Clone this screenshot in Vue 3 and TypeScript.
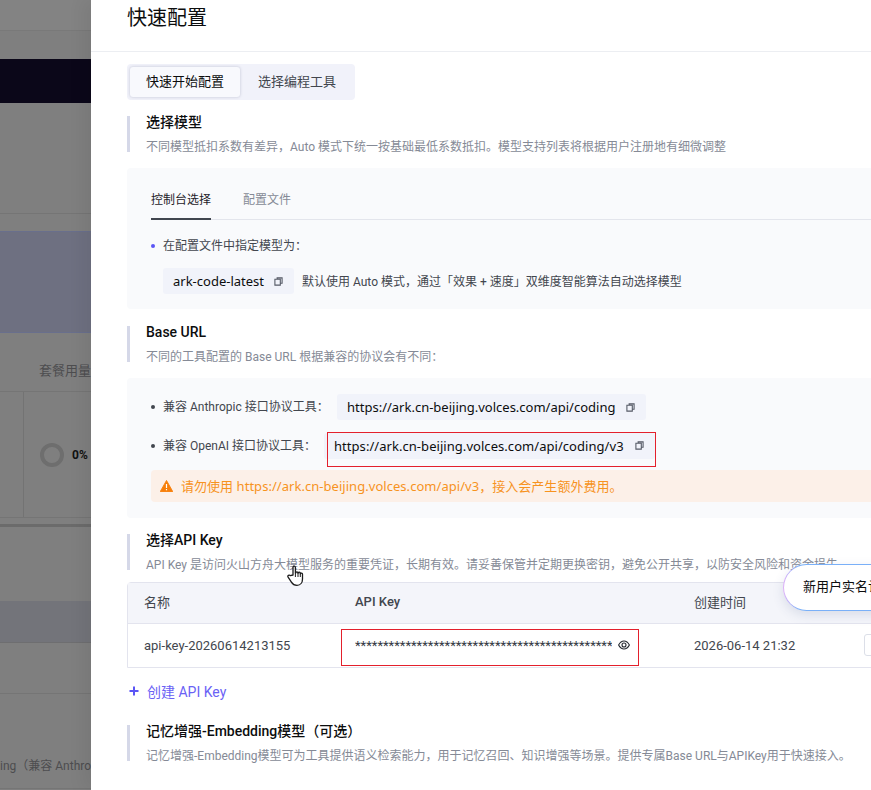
<script setup lang="ts">
const apiKeyMask = '*'.repeat(46)
</script>

<template>
  <div class="page">
    <!-- dimmed page behind the drawer -->
    <aside class="backdrop">
      <div class="band top"></div>
      <div class="band plain h28"></div>
      <div class="band dark"></div>
      <div class="band plain h111 line-bottom"></div>
      <div class="band plain h17"></div>
      <div class="band banner"></div>
      <div class="band usage-title"><span>套餐用量</span></div>
      <div class="band usage">
        <div class="usage-cell"></div>
        <div class="ring"></div>
        <b class="pct">0%</b>
      </div>
      <div class="band plain h6"></div>
      <div class="band thick"></div>
      <div class="band plain h73"></div>
      <div class="band greyblue"></div>
      <div class="band plain h51 line-bottom"></div>
      <div class="band clipped"><span>ing（兼容 Anthropic</span></div>
    </aside>

    <main class="drawer">
      <header class="drawer-head">快速配置</header>

      <div class="drawer-body">
        <div class="segment">
          <span class="seg active">快速开始配置</span>
          <span class="seg">选择编程工具</span>
        </div>

        <section class="heading">
          <h3>选择模型</h3>
          <p>不同模型抵扣系数有差异，Auto 模式下统一按基础最低系数抵扣。模型支持列表将根据用户注册地有细微调整</p>
        </section>

        <div class="panel model-panel">
          <div class="tabs">
            <span class="tab active">控制台选择</span>
            <span class="tab">配置文件</span>
          </div>
          <div class="li first"><i class="dot blue"></i>在配置文件中指定模型为：</div>
          <div class="model-row">
            <span class="chip model-chip">
              ark-code-latest
              <svg class="copy" viewBox="0 0 10 10" width="9" height="9"><path d="M3.500 2.500V1h5.500v6H7.200M1 2.500h6v6.500H1z" fill="none" stroke="#555a66" stroke-width="1.200" /></svg>
            </span>
            <span class="hint">默认使用 Auto 模式，通过「效果 + 速度」双维度智能算法自动选择模型</span>
          </div>
        </div>

        <section class="heading base-url">
          <h3>Base URL</h3>
          <p>不同的工具配置的 Base URL 根据兼容的协议会有不同：</p>
        </section>

        <div class="panel url-panel">
          <div class="url-row first-url">
            <i class="dot"></i>
            <span class="url-label">兼容 Anthropic 接口协议工具：</span>
            <span class="chip url-chip">
              https://ark.cn-beijing.volces.com/api/coding
              <svg class="copy" viewBox="0 0 10 10" width="9" height="9"><path d="M3.500 2.500V1h5.500v6H7.200M1 2.500h6v6.500H1z" fill="none" stroke="#555a66" stroke-width="1.200" /></svg>
            </span>
          </div>
          <div class="url-row second-url">
            <i class="dot"></i>
            <span class="url-label">兼容 OpenAI 接口协议工具：</span>
            <span class="chip url-chip">
              https://ark.cn-beijing.volces.com/api/coding/v3
              <svg class="copy" viewBox="0 0 10 10" width="9" height="9"><path d="M3.500 2.500V1h5.500v6H7.200M1 2.500h6v6.500H1z" fill="none" stroke="#555a66" stroke-width="1.200" /></svg>
            </span>
            <span class="red-box url-box"></span>
          </div>
          <div class="warn">
            <svg viewBox="0 0 14 13" width="13" height="12"><path d="M7 .5 13.800 12.600H.2z" fill="#f77f0a" stroke="#f77f0a" stroke-linejoin="round" /><path d="M7 4.400v4.200M7 9.800v1.300" stroke="#fff" stroke-width="1.300" /></svg>
            <span>请勿使用 https://ark.cn-beijing.volces.com/api/v3，接入会产生额外费用。</span>
          </div>
        </div>

        <section class="heading api-key">
          <h3>选择API Key</h3>
          <p>API Key 是访问火山方舟大模型服务的重要凭证，长期有效。请妥善保管并定期更换密钥，避免公开共享，以防安全风险和资金损失。</p>
        </section>

        <div class="table">
          <div class="tr thead">
            <span class="c1">名称</span>
            <span class="c2 strong">API Key</span>
            <span class="c3">创建时间</span>
          </div>
          <div class="tr tbody">
            <span class="c1">api-key-20260614213155</span>
            <span class="c2 key">
              <span class="stars">{{ apiKeyMask }}</span>
              <svg viewBox="0 0 12 10" width="12" height="10"><path d="M.6 5C2 2.400 3.900 1 6 1s4 1.400 5.400 4C10 7.600 8.100 9 6 9S2 7.600.6 5z" fill="none" stroke="#24282f" stroke-width="1.100" /><circle cx="6" cy="5" r="2" fill="none" stroke="#24282f" stroke-width="1.100" /></svg>
              <span class="red-box key-box"></span>
            </span>
            <span class="c3">2026-06-14 21:32</span>
            <span class="row-btn"></span>
          </div>
        </div>

        <a class="create">
          <svg viewBox="0 0 10 10" width="10" height="10"><path d="M5 .5v9M.5 5h9" stroke="#5b55f5" stroke-width="2" /></svg>
          创建 API Key
        </a>

        <section class="heading memory">
          <h3>记忆增强-Embedding模型（可选）</h3>
          <p>记忆增强-Embedding模型可为工具提供语义检索能力，用于记忆召回、知识增强等场景。提供专属Base URL与APIKey用于快速接入。</p>
        </section>
      </div>

      <div class="promo"><span>新用户实名认证</span></div>
      <svg class="cursor" viewBox="0 0 18 22" width="18" height="22">
        <path d="M6 10V2.400c0-1.700 2.400-1.700 2.400 0V8l.3-.1c0-1.500 2.300-1.500 2.300 0l.1.300c.2-1.400 2.200-1.300 2.200.1l.1.500c.3-1.100 2.100-1 2.100.4v4.700c0 3.600-2 6.400-5.500 6.400-2.800 0-4.300-1-5.600-3.200L1.100 12.200c-.9-1.500 1-2.800 2.200-1.600z" fill="#fff" stroke="#1c1c1c" stroke-width="1.300" stroke-linejoin="round" />
        <path d="M8.400 8v4M11 8v4M13.300 8.300V12" stroke="#1c1c1c" stroke-width="1" fill="none" />
      </svg>
    </main>
  </div>
</template>

<style>
html,
body {
  margin: 0;
  overflow: hidden;
}
</style>

<style scoped>
.page {
  display: flex;
  width: 871px;
  height: 790px;
  overflow: hidden;
  font-family: Roboto, "Noto Sans CJK SC", sans-serif;
  color: #1d2129;
}

.backdrop {
  width: 91px;
  flex: none;
  display: flex;
  flex-direction: column;
  overflow: hidden;
  background: #7f7f7f;
  font-size: 13px;
  color: #4d4d4f;
}
.band { flex: none; box-sizing: border-box; }
.top { height: 31px; background: #838383; border-bottom: 1px solid #797979; }
.plain { background: #7f7f7f; }
.h28 { height: 28px; }
.dark { height: 44px; background: #0b0719; }
.h111 { height: 111px; }
.h17 { height: 17px; }
.h6 { height: 6px; }
.h73 { height: 74px; }
.h51 { height: 51px; }
.line-bottom { border-bottom: 1px solid #757575; }
.banner {
  height: 102px;
  background: #6e7081;
  border-top: 1px solid #696f8c;
  border-bottom: 1px solid #696f8c;
}
.usage-title {
  height: 59px;
  padding: 27px 0 0 39px;
  white-space: nowrap;
  border-bottom: 1px solid #757575;
}
.usage {
  height: 126px;
  display: flex;
  align-items: center;
  border-bottom: 1px solid #757575;
}
.usage-cell {
  width: 24px;
  height: 100%;
  flex: none;
  box-sizing: border-box;
  border-right: 1px solid #737373;
}
.ring {
  width: 24px;
  height: 24px;
  flex: none;
  box-sizing: border-box;
  margin-left: 16px;
  border: 4px solid #6e6e6e;
  border-radius: 50%;
}
.pct {
  margin-left: 8px;
  font-size: 12px;
  color: #111;
}
.thick { height: 3px; background: #6b6b6b; }
.greyblue {
  height: 42px;
  background: #73747a;
  border-bottom: 1px solid #6e6e70;
}
.clipped {
  height: 95px;
  padding-top: 62px;
  font-size: 12px;
  white-space: nowrap;
  border-bottom: 1px solid #757575;
}

.drawer {
  position: relative;
  flex: 1;
  min-width: 0;
  background: #fff;
  overflow: hidden;
  box-shadow: -8px 0 16px rgba(0, 0, 0, 0.06);
}
.drawer-head {
  height: 52px;
  box-sizing: border-box;
  padding: 5px 0 0 36px;
  font-size: 20px;
  line-height: 26px;
  color: #0c0d0e;
  border-bottom: 1px solid #eceef2;
}
.drawer-body {
  width: 840px;
  padding: 12px 0 0 36px;
}

.segment {
  display: inline-flex;
  height: 36px;
  box-sizing: border-box;
  padding: 3px;
  background: #f1f2fa;
  border-radius: 4px;
  vertical-align: top;
}
.seg {
  width: 110px;
  box-sizing: border-box;
  font-size: 13px;
  line-height: 30px;
  color: #42464e;
  text-align: center;
}
.seg.active {
  background: #f8f9fd;
  border-radius: 3px;
  color: #0c0d0e;
  box-shadow: 0 0 3px rgba(40, 50, 90, 0.25);
}
.seg + .seg { width: 112px; padding-left: 2px; }

.heading {
  height: 36px;
  margin-top: 16px;
  padding-left: 16px;
  border-left: 3px solid #d5d8e8;
  white-space: nowrap;
}
.heading h3 {
  margin: 0;
  font-size: 14px;
  font-weight: 500;
  line-height: 12px;
  color: #0c0d0e;
}
.heading p {
  margin: 12px 0 0;
  font-size: 12px;
  line-height: 14px;
  color: #858a96;
}
.base-url { margin-top: 17px; }

.panel {
  margin-top: 16px;
  background: #f9fafc;
  border-radius: 4px;
  padding-left: 24px;
  font-size: 12px;
  color: #42464e;
}
.model-panel { height: 141px; box-sizing: border-box; }
.tabs {
  display: flex;
  gap: 32px;
  height: 52px;
  box-sizing: border-box;
  border-bottom: 1px solid #e3e5ec;
}
.tab {
  height: 52px;
  box-sizing: border-box;
  padding-top: 24px;
  line-height: 16px;
  color: #858a96;
}
.tab.active {
  color: #1d2129;
  border-bottom: 2px solid #41464f;
}
.li {
  display: flex;
  align-items: center;
  margin-top: 17px;
  line-height: 18px;
}
.dot {
  width: 4px;
  height: 4px;
  flex: none;
  margin: 0 8px 0 0;
  border-radius: 50%;
  background: #42464e;
}
.dot.blue { background: #5b55f5; }
.model-row {
  display: flex;
  align-items: center;
  margin: 13px 0 0 12px;
}
.chip {
  display: inline-flex;
  align-items: center;
  height: 26px;
  box-sizing: border-box;
  background: #f1f3fa;
  border-radius: 3px;
  font-family: "Noto Sans", "Noto Sans CJK SC", sans-serif;
  color: #0c0d0e;
  white-space: nowrap;
}
.model-chip {
  width: 131px;
  padding-left: 10px;
  font-size: 13px;
}
.copy { flex: none; margin-left: auto; }
.model-chip .copy { margin-right: 11px; }
.hint { margin-left: 8px; padding-bottom: 2px; white-space: nowrap; }

.url-panel { height: 140px; padding-top: 16px; box-sizing: border-box; }
.url-row {
  display: flex;
  align-items: center;
  position: relative;
  white-space: nowrap;
}
.second-url { margin-top: 13px; }
.url-label { width: 174px; flex: none; padding-bottom: 3px; }
.second-url .url-label { width: 161px; }
.url-chip {
  padding-left: 10px;
  font-size: 13px;
}
.second-url .url-chip { padding-bottom: 1px; letter-spacing: 0.05px; }
.url-chip .copy { margin: 0 11px 0 11px; }
.red-box {
  position: absolute;
  box-sizing: border-box;
  border: 1px solid #e3202c;
  pointer-events: none;
}
.url-box {
  left: 176px;
  top: -1px;
  width: 329px;
  height: 35px;
}
.warn {
  display: flex;
  align-items: center;
  height: 32px;
  margin: 11px 0 0 0;
  padding-left: 9px;
  background: #fcf0e8;
  border-radius: 4px;
  font-family: "Noto Sans", "Noto Sans CJK SC", sans-serif;
  font-size: 13px;
  letter-spacing: 0.04px;
  color: #f7931e;
  white-space: nowrap;
}
.warn span { margin-left: 8px; padding-bottom: 2px; }

.api-key { margin-top: 16px; }
.table {
  margin-top: 12px;
  height: 86px;
  box-sizing: border-box;
  border: 1px solid #e3e4ee;
  border-radius: 4px 0 0 0;
  font-size: 13px;
  color: #42464e;
}
.tr {
  display: flex;
  align-items: center;
  white-space: nowrap;
}
.thead {
  height: 37px;
  padding-bottom: 3px;
  background: #f4f5fa;
  border-bottom: 1px solid #e3e4ee;
  box-sizing: content-box;
}
.tbody { height: 42px; padding-bottom: 2px; }
.c1 { width: 211px; padding-left: 16px; box-sizing: border-box; flex: none; }
.c2 { width: 355px; padding-left: 16px; box-sizing: border-box; flex: none; }
.strong { font-weight: 500; }
.c3 { flex: none; width: 170px; }
.key {
  position: relative;
  display: flex;
  align-items: center;
}
.stars {
  width: 257px;
  flex: none;
  overflow: hidden;
  font-size: 13px;
  color: #333842;
}
.key svg { margin: 0 0 0 6px; }
.key-box {
  left: 2px;
  top: -9px;
  width: 298px;
  height: 37px;
}
.row-btn {
  width: 30px;
  height: 22px;
  box-sizing: border-box;
  border: 1px solid #dcdfe8;
  border-radius: 3px;
  flex: none;
}
.create {
  display: flex;
  align-items: center;
  gap: 8px;
  height: 20px;
  margin: 13px 0 0 2px;
  font-size: 14px;
  color: #6a62f5;
}
.memory { margin-top: 24px; }

.promo {
  position: absolute;
  left: 692px;
  top: 564px;
  width: 200px;
  height: 47px;
  box-sizing: border-box;
  padding: 0 0 0 19px;
  border: 1px solid transparent;
  border-radius: 24px;
  background:
    linear-gradient(#fff, #fff) padding-box,
    linear-gradient(90deg, #e0b0f8, #7ab0f8 8%, #7ab0f8) border-box;
  box-shadow: 0 4px 12px rgba(60, 80, 130, 0.14);
  font-size: 13px;
  line-height: 44px;
  color: #0c0d0e;
  white-space: nowrap;
}
.cursor {
  position: absolute;
  left: 196px;
  top: 565px;
}
</style>
